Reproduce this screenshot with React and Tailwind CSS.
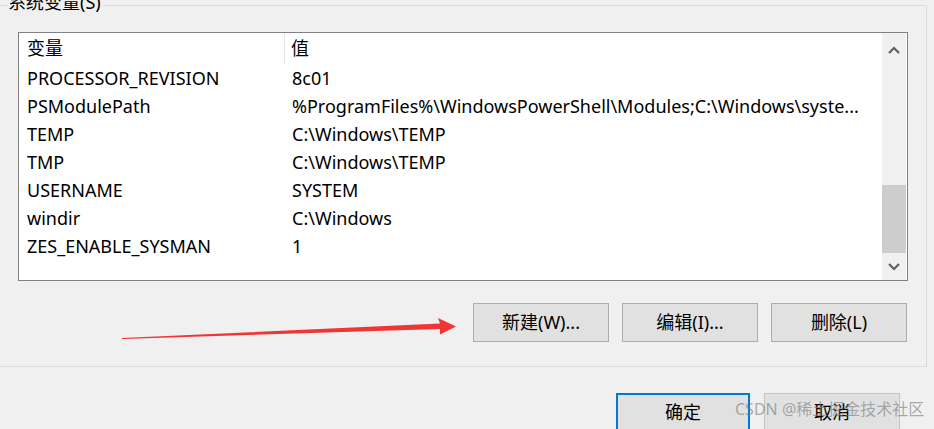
const rows = [
	["PROCESSOR_REVISION", "8c01"],
	["PSModulePath", "%ProgramFiles%\\WindowsPowerShell\\Modules;C:\\Windows\\syste..."],
	["TEMP", "C:\\Windows\\TEMP"],
	["TMP", "C:\\Windows\\TEMP"],
	["USERNAME", "SYSTEM"],
	["windir", "C:\\Windows"],
	["ZES_ENABLE_SYSMAN", "1"],
];

function Chevron({ up }) {
	return (
		<svg width="12" height="8" viewBox="0 0 12 8">
			<polyline
				points={up ? "1,7 6,2 11,7" : "1,1 6,6 11,1"}
				fill="none"
				stroke="#606060"
				strokeWidth="2.2"
			/>
		</svg>
	);
}

function Btn({ children, className = "" }) {
	return (
		<button
			className={
				"flex items-center justify-center bg-[#e1e1e1] text-[18px] text-black " +
				className
			}
		>
			{children}
		</button>
	);
}

export default function App() {
	return (
		<div className="relative w-[934px] h-[429px] overflow-hidden bg-[#f0f0f0] font-['Noto_Sans','Noto_Sans_CJK_SC',sans-serif] text-[18px] text-black">
			{/* group box */}
			<div className="relative mt-[5px] ml-[-2px] w-[929px] h-[362px] border border-[#dcdcdc] pt-[26px] pl-[19px] pr-[18px]">
				<span className="absolute left-[9px] top-[-16px] bg-[#f0f0f0] pr-[2px] leading-[24px]">
					系统变量(S)
				</span>

				<div className="flex w-[890px] h-[249px] border border-[#828282] bg-white">
					<div className="w-[863px]">
						<div className="flex h-[31px] items-center">
							<div className="w-[266px] pl-[8px] border-r border-[#e5e5e5] h-full flex items-center">
								变量
							</div>
							<div className="pl-[6px]">值</div>
						</div>
						{rows.map(([k, v]) => (
							<div key={k} className="flex h-[28px] items-center whitespace-nowrap">
								<div className="w-[267px] pl-[8px]">{k}</div>
								<div className="pl-[6px]">{v}</div>
							</div>
						))}
					</div>
					<div className="flex w-[24px] flex-col bg-[#f0f0f0]">
						<div className="flex h-[34px] items-center justify-center">
							<Chevron up />
						</div>
						<div className="h-[118px]" />
						<div className="h-[68px] bg-[#cdcdcd]" />
						<div className="flex flex-1 items-center justify-center">
							<Chevron />
						</div>
					</div>
				</div>

				<div className="mt-[22px] flex justify-end gap-[13px] pr-[1px]">
					<Btn className="w-[136px] h-[39px] border border-[#adadad]">新建(W)...</Btn>
					<Btn className="w-[136px] h-[39px] border border-[#adadad]">编辑(I)...</Btn>
					<Btn className="w-[136px] h-[39px] border border-[#adadad]">删除(L)</Btn>
				</div>
			</div>

			{/* dialog buttons */}
			<div className="mt-[26px] flex justify-end gap-[14px] pr-[34px]">
				<Btn className="w-[134px] h-[39px] border-2 border-[#0078d7]">确定</Btn>
				<Btn className="w-[136px] h-[39px] border border-[#c4c4c4]">取消</Btn>
			</div>

			{/* red annotation arrow */}
			<svg className="absolute left-0 top-0" width="934" height="429">
				<polygon
					points="122,338 440,323.5 438,318 456,326.5 440,334.5 440,329 122,339"
					fill="#f03535"
				/>
			</svg>

			{/* watermark */}
			<div className="pointer-events-none absolute left-[735px] top-[398px] whitespace-nowrap text-[16px] leading-[22px] text-[rgba(120,120,120,0.6)]">
				CSDN @稀土掘金技术社区
			</div>
		</div>
	);
}
